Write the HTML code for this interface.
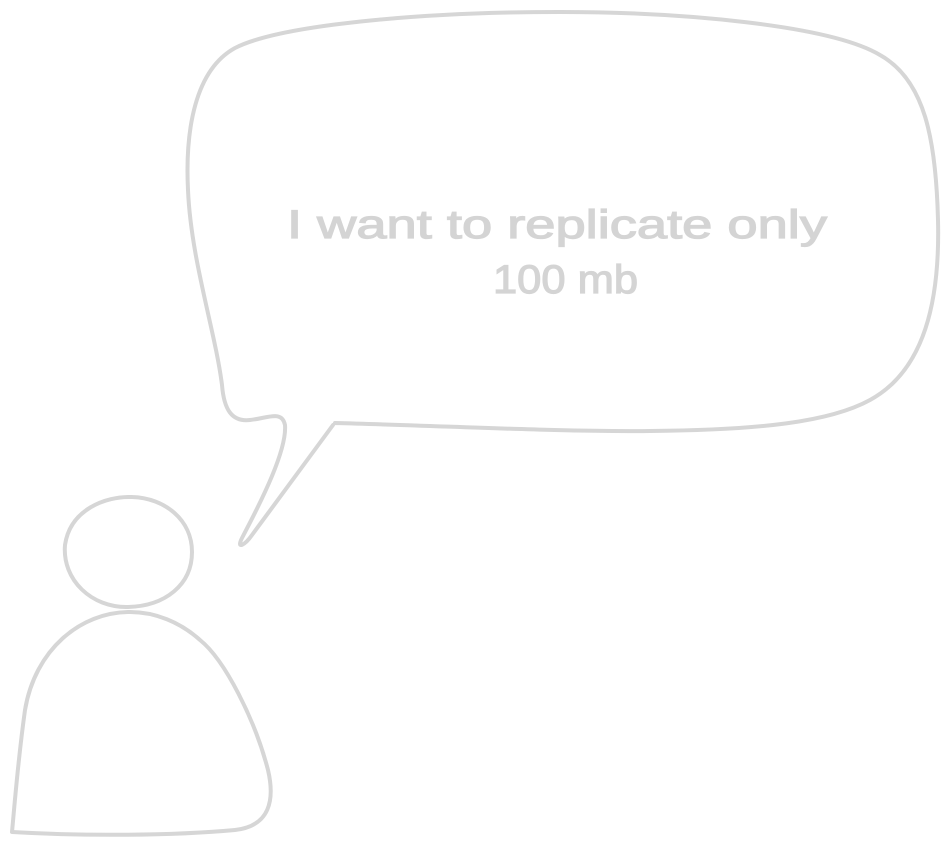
<!DOCTYPE html>
<html><head><style>html,body{margin:0;padding:0;background:#fff;width:948px;height:844px;overflow:hidden}</style></head>
<body>
<svg width="948" height="844" viewBox="0 0 948 844" xmlns="http://www.w3.org/2000/svg">
<g fill="none" stroke="#d6d6d6" stroke-width="4" stroke-linecap="round" stroke-linejoin="round">
<path d="M335 423 C 450 426, 560 432, 650 431 C 760 430, 830 422, 870 400 C 925 370, 940 300, 938 220 C 936 140, 925 80, 880 55 C 830 25, 680 12, 560 12 C 420 12, 280 25, 235 48 C 195 70, 185 130, 188 190 C 191 260, 215 330, 222 385 C 224 410, 232 422, 250 420 C 268 418, 282 410, 285 425 C 287 450, 262 500, 242 538 C 236 550, 245 545, 252 535 L 333 425"/>
<path d="M132 497 C 105 496, 70 510, 65 545 C 62 580, 92 608, 128 607 C 165 606, 192 585, 192 552 C 192 520, 165 498, 132 497"/>
<path d="M130 612 C 80 612, 35 650, 25 710 C 18 760, 15 800, 12 832 C 80 836, 170 836, 235 830 C 270 826, 275 800, 268 770 C 255 720, 225 660, 200 640 C 180 622, 155 612, 130 612"/>
</g>
<g fill="#d4d4d4" stroke="#d4d4d4" stroke-width="1.2" font-family="'Liberation Sans', sans-serif" font-size="40">
<text x="287" y="238" textLength="540" lengthAdjust="spacingAndGlyphs">I want to replicate only</text>
<text x="493" y="293" textLength="145" lengthAdjust="spacingAndGlyphs">100 mb</text>
</g>
</svg>
</body></html>
